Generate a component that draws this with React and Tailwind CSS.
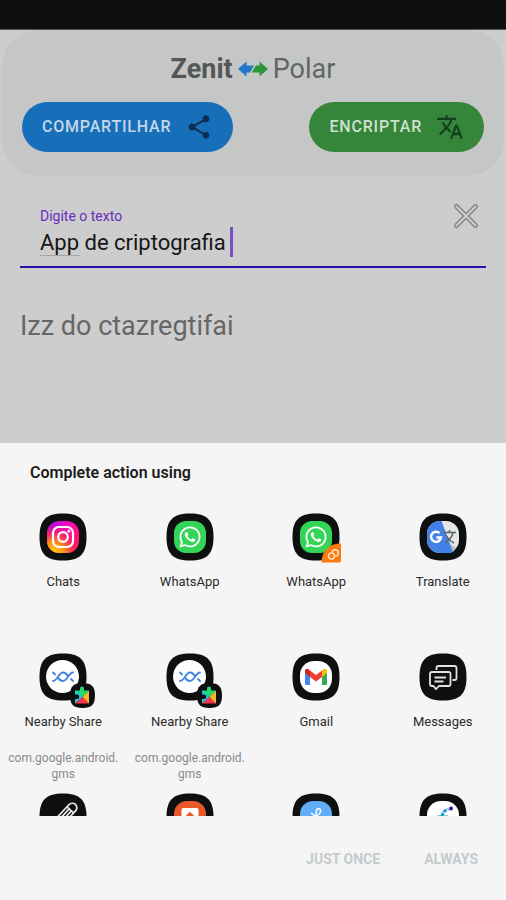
import { useState } from "react"
import { MdShare, MdTranslate } from "react-icons/md"
import { FaWhatsapp } from "react-icons/fa"

function IconShell({ children }) {
  return (
    <svg viewBox="0 0 48 48" className="h-12 w-12 overflow-visible" aria-hidden="true">
      <path d="M24 0.5C41 0.5 47.5 7 47.5 24S41 47.5 24 47.5 0.5 41 0.5 24 7 0.5 24 0.5Z" fill="#0e0f0f" />
      {children}
    </svg>
  )
}

function Instagram() {
  return (
    <IconShell>
      <defs>
        <linearGradient id="igBase" x1="0" y1="0" x2="1" y2="0.6">
          <stop offset="0" stopColor="#8a10f0" />
          <stop offset="0.5" stopColor="#f50ac0" />
          <stop offset="1" stopColor="#ff1668" />
        </linearGradient>
        <radialGradient id="igWarm" cx="0.2" cy="1" r="0.9">
          <stop offset="0" stopColor="#ffd400" />
          <stop offset="0.4" stopColor="#ff8c1a" />
          <stop offset="0.75" stopColor="#ff2355" stopOpacity="0.6" />
          <stop offset="1" stopColor="#ff1070" stopOpacity="0" />
        </radialGradient>
      </defs>
      <rect x="8" y="8" width="32" height="32" rx="12" fill="url(#igBase)" />
      <rect x="8" y="8" width="32" height="32" rx="12" fill="url(#igWarm)" />
      <g fill="none" stroke="#fff" strokeWidth="2.2">
        <rect x="14" y="14" width="20" height="20" rx="6" />
        <circle cx="24" cy="24" r="4.8" />
      </g>
      <circle cx="29.8" cy="18.2" r="1.4" fill="#fff" />
    </IconShell>
  )
}

function WhatsApp({ dual }) {
  return (
    <IconShell>
      <rect x="8" y="8" width="32" height="32" rx="12" fill="#32d557" />
      <FaWhatsapp x="12" y="12" size={24} color="#fff" />
      {dual && (
        <g>
          <path d="M49 30.5V47.5A2 2 0 0 1 47 49.5H29.500C29.500 38 37 30.500 49 30.500Z" fill="#fb7a0e" />
          <g fill="none" stroke="#ffe3c8" strokeWidth="1.5">
            <circle cx="39.500" cy="43" r="3" />
            <path d="M40 39.500A3.200 3.200 0 1 1 43.500 43.200" />
          </g>
        </g>
      )}
    </IconShell>
  )
}

function Translate() {
  return (
    <IconShell>
      <rect x="8" y="8" width="32" height="32" rx="13" fill="#e4e6e8" />
      <path d="M21 8H22.500L34 38.500L32 40H21A13 13 0 0 1 8 27V21A13 13 0 0 1 21 8Z" fill="#4381e8" />
      <path d="M31.500 31.500L34 39L37 35Z" fill="#b9bcc0" />
      <path d="M20.500 20.200A5 5 0 1 0 22 24.500H17.300" fill="none" stroke="#fff" strokeWidth="2.5" />
      <path d="M24 19.500H37M30.500 17V19.500M34 20C33 24 29 28 26 30M27 22C29 26 32 28.500 35 30" fill="none" stroke="#5d6368" strokeWidth="1.5" />
    </IconShell>
  )
}

function NearbyShare() {
  return (
    <IconShell>
      <circle cx="23.5" cy="23.5" r="16.5" fill="#fff" />
      <g fill="none" stroke="#4285e0" strokeWidth="1.8" strokeLinecap="round">
        <path d="M14 28C18.500 28 19.500 19.500 24 19.500C26.500 19.500 28 21.500 29 23.500" />
        <path d="M19 24.500C20 26.500 21.500 28 24 28C28.500 28 29.500 19.500 34 19.500" />
        <path d="M14 19.500L16 21.500M32 26L34 28" />
      </g>
      <path d="M43.500 30C52.500 30 56 33.500 56 42.500S52.500 55 43.500 55 31 51.500 31 42.500 34.500 30 43.500 30Z" fill="#0e0f0f" />
      <path d="M36 37.500H41V35.500A2 2 0 0 1 45 35.500V37.500H50L43.500 44L36 39Z" fill="#1fdc6e" />
      <path d="M36 37.500L43.500 44L36 50.500V46H38A2 2 0 0 0 38 41.500H36Z" fill="#22c5f0" />
      <path d="M43.500 44L50 50.500H36Z" fill="#f4364c" />
      <path d="M43.500 44L50 37.500V50.500Z" fill="#f9b529" />
    </IconShell>
  )
}

function Gmail() {
  return (
    <IconShell>
      <rect x="8" y="8" width="32" height="32" rx="14" fill="#fff" />
      <path d="M13 18V30.500A1.500 1.500 0 0 0 14.500 32H18V21Z" fill="#4285f4" />
      <path d="M35 18V30.500A1.500 1.500 0 0 1 33.500 32H30V21Z" fill="#34a853" />
      <path d="M30 17.500L31.500 16.300C33 15.200 35 16.200 35 18V20L30 24Z" fill="#fbbc04" />
      <path d="M18 24V17.500L24 22L30 17.500V24L24 28.500Z" fill="#ea4335" />
      <path d="M13 18C13 16.200 15 15.200 16.500 16.300L18 17.500V24L13 20Z" fill="#d0281e" />
    </IconShell>
  )
}

function Messages() {
  return (
    <IconShell>
      <g fill="none" stroke="#e2e2e2" strokeWidth="1.8" strokeLinejoin="round">
        <path d="M17.500 17V15A2 2 0 0 1 19.500 13H35.500A2 2 0 0 1 37.500 15V25A2 2 0 0 1 35.500 27H33.500" />
        <path d="M13 19H29.500A2 2 0 0 1 31.500 21V31A2 2 0 0 1 29.500 33H20L17 36.200L14.500 33H13A2 2 0 0 1 11 31V21A2 2 0 0 1 13 19Z" />
        <path d="M15.500 24.500H27M15.500 28.500H24.500" />
      </g>
    </IconShell>
  )
}

function Notes() {
  return (
    <IconShell>
      <g fill="none" stroke="#e8e8e8" strokeWidth="1.7" transform="translate(34 14) rotate(43)">
        <path d="M-4.500 24V1A4.500 4.500 0 0 1 4.500 1V24L0 30Z" />
        <path d="M-4.500 4H4.500M-1.500 4V22M1.500 4V22" />
      </g>
    </IconShell>
  )
}

function Reader() {
  return (
    <IconShell>
      <rect x="8" y="8" width="32" height="32" rx="13" fill="#e8582a" />
      <rect x="15.500" y="15" width="17" height="20" rx="2" fill="#fff" />
      <path d="M24 18.500C25 20.500 28 21.500 28 23.500H20C20 21.500 23 20.500 24 18.500Z" fill="#e8582a" />
    </IconShell>
  )
}

function Bluetooth() {
  return (
    <IconShell>
      <rect x="8" y="8" width="32" height="32" rx="13" fill="#60adf6" />
      <path d="M19 20L30 28L24 34V22C24 19 24 15.500 26.500 15.500C29.500 16 29 19 27 21L18 29" fill="none" stroke="#fff" strokeWidth="1.5" />
    </IconShell>
  )
}

function Connect() {
  return (
    <IconShell>
      <rect x="8" y="8" width="32" height="32" rx="14" fill="#fff" />
      <path d="M23 24C23.500 19.500 25.500 17 29.500 16.200" fill="none" stroke="#1a9be0" strokeWidth="3" strokeDasharray="4 1" />
      <circle cx="32" cy="15.500" r="2" fill="#2a1a8a" />
      <path d="M18 23.500H29" stroke="#0fa08c" strokeWidth="2" />
    </IconShell>
  )
}

const apps = [
  { id: 1, name: "Chats", icon: <Instagram /> },
  { id: 2, name: "WhatsApp", icon: <WhatsApp /> },
  { id: 3, name: "WhatsApp", icon: <WhatsApp dual /> },
  { id: 4, name: "Translate", icon: <Translate /> },
  { id: 5, name: "Nearby Share", detail: ["com.google.android.", "gms"], icon: <NearbyShare /> },
  { id: 6, name: "Nearby Share", detail: ["com.google.android.", "gms"], icon: <NearbyShare /> },
  { id: 7, name: "Gmail", icon: <Gmail /> },
  { id: 8, name: "Messages", icon: <Messages /> },
  { id: 9, label: "Notes", icon: <Notes /> },
  { id: 10, label: "Reader", icon: <Reader /> },
  { id: 11, label: "Bluetooth", icon: <Bluetooth /> },
  { id: 12, label: "Connect", icon: <Connect /> },
]

export default function App() {
  const [text, setText] = useState("App de criptografia")
  const [selected, setSelected] = useState(null)

  return (
    <div className="flex min-h-screen flex-col bg-[#cdcdcd] font-[Roboto,sans-serif]">
      {/* Status bar */}
      <div className="h-[30px] bg-[#0f0f0f] border-b border-[#555]"></div>

      {/* Header */}
      <header className="mx-0.5 rounded-[36px] bg-[#c5c7c7] px-5 pt-[21px] pb-6">
        <h1 className="flex items-center justify-center gap-1 text-[27px] leading-9 text-[#636464]">
          <span className="font-bold text-[#555656]">Zenit</span>
          <svg viewBox="0 0 32 18" className="h-[18px] w-8" aria-hidden="true">
            <path d="M1 9L9.500 1.500V5.500H17L13 12.500H9.500V16.500Z" fill="#1f78c8" />
            <path d="M31 9L22.500 1.500V5.500H19L14.500 12.500H22.500V16.500Z" fill="#2f9638" />
          </svg>
          <span>Polar</span>
        </h1>
        <div className="mt-[15px] flex items-center justify-between">
          <button className="flex h-[50px] items-center gap-3.5 rounded-full bg-[#176fba] px-5 text-base font-medium tracking-wider text-[#c4d6e8]">
            COMPARTILHAR
            <MdShare className="h-7 w-7 text-[#0b2f52]" />
          </button>
          <button className="flex h-[50px] items-center gap-3.5 rounded-full bg-[#35853a] px-5 text-base font-medium tracking-wider text-[#cfe0d0]">
            ENCRIPTAR
            <MdTranslate className="h-7 w-7 text-[#12401a]" />
          </button>
        </div>
      </header>

      {/* Text field */}
      <main className="px-5 pt-6">
        <div className="flex items-start justify-between border-b-2 border-[#2414a8] pl-5 pb-1.5">
          <div className="pt-2">
            <label htmlFor="source" className="block text-sm leading-4 text-[#6a2cc0]">Digite o texto</label>
            <div className="relative flex h-9 items-center gap-1">
              <input
                id="source"
                className="field-sizing-content bg-transparent text-[22px] text-[#161616] outline-none"
                value={text}
                onChange={(e) => setText(e.target.value)}
              />
              <span className="h-[30px] w-[3px] bg-[#7a50c8]"></span>
              <span className="absolute bottom-1 left-0 h-px w-10 bg-[#a5a5a5]"></span>
            </div>
          </div>
          <button aria-label="Limpar" className="mr-1 p-0.5" onClick={() => setText("")}>
            <svg viewBox="0 0 28 28" className="h-7 w-7">
              <path d="M4.500 4.500L23.500 23.500M23.500 4.500L4.500 23.500" stroke="#858585" strokeWidth="5" strokeLinecap="round" />
              <path d="M4.500 4.500L23.500 23.500M23.500 4.500L4.500 23.500" stroke="#cdcdcd" strokeWidth="2" strokeLinecap="round" />
            </svg>
          </button>
        </div>
        <p className="mt-10 text-[27px] leading-9 text-[#666]">Izz do ctazregtifai</p>
      </main>

      {/* Share sheet */}
      <section className="mt-auto bg-[#f5f5f5] text-[#2b2b2b]">
        <h2 className="px-[30px] pt-[18px] text-base leading-6 font-semibold text-[#1c1c1c]">Complete action using</h2>
        <div className="mt-7 grid h-[303px] auto-rows-[140px] grid-cols-4 overflow-hidden">
          {apps.map((app) => (
            <button
              key={app.id}
              aria-label={app.label}
              onClick={() => setSelected(app.id)}
              className="flex flex-col items-center"
            >
              {app.icon}
              <span className="mt-[13px] text-[13px] leading-4">{app.name}</span>
              {app.detail && (
                <span className="mt-5 text-xs leading-4 text-[#8a8a8a]">
                  {app.detail[0]}
                  <br />
                  {app.detail[1]}
                </span>
              )}
            </button>
          ))}
        </div>
        <div className="flex h-[84px] items-center justify-end gap-11 px-7 pt-0.5 text-sm font-bold text-[#c3cbce]">
          <button disabled={!selected}>JUST ONCE</button>
          <button disabled={!selected}>ALWAYS</button>
        </div>
      </section>
    </div>
  )
}
